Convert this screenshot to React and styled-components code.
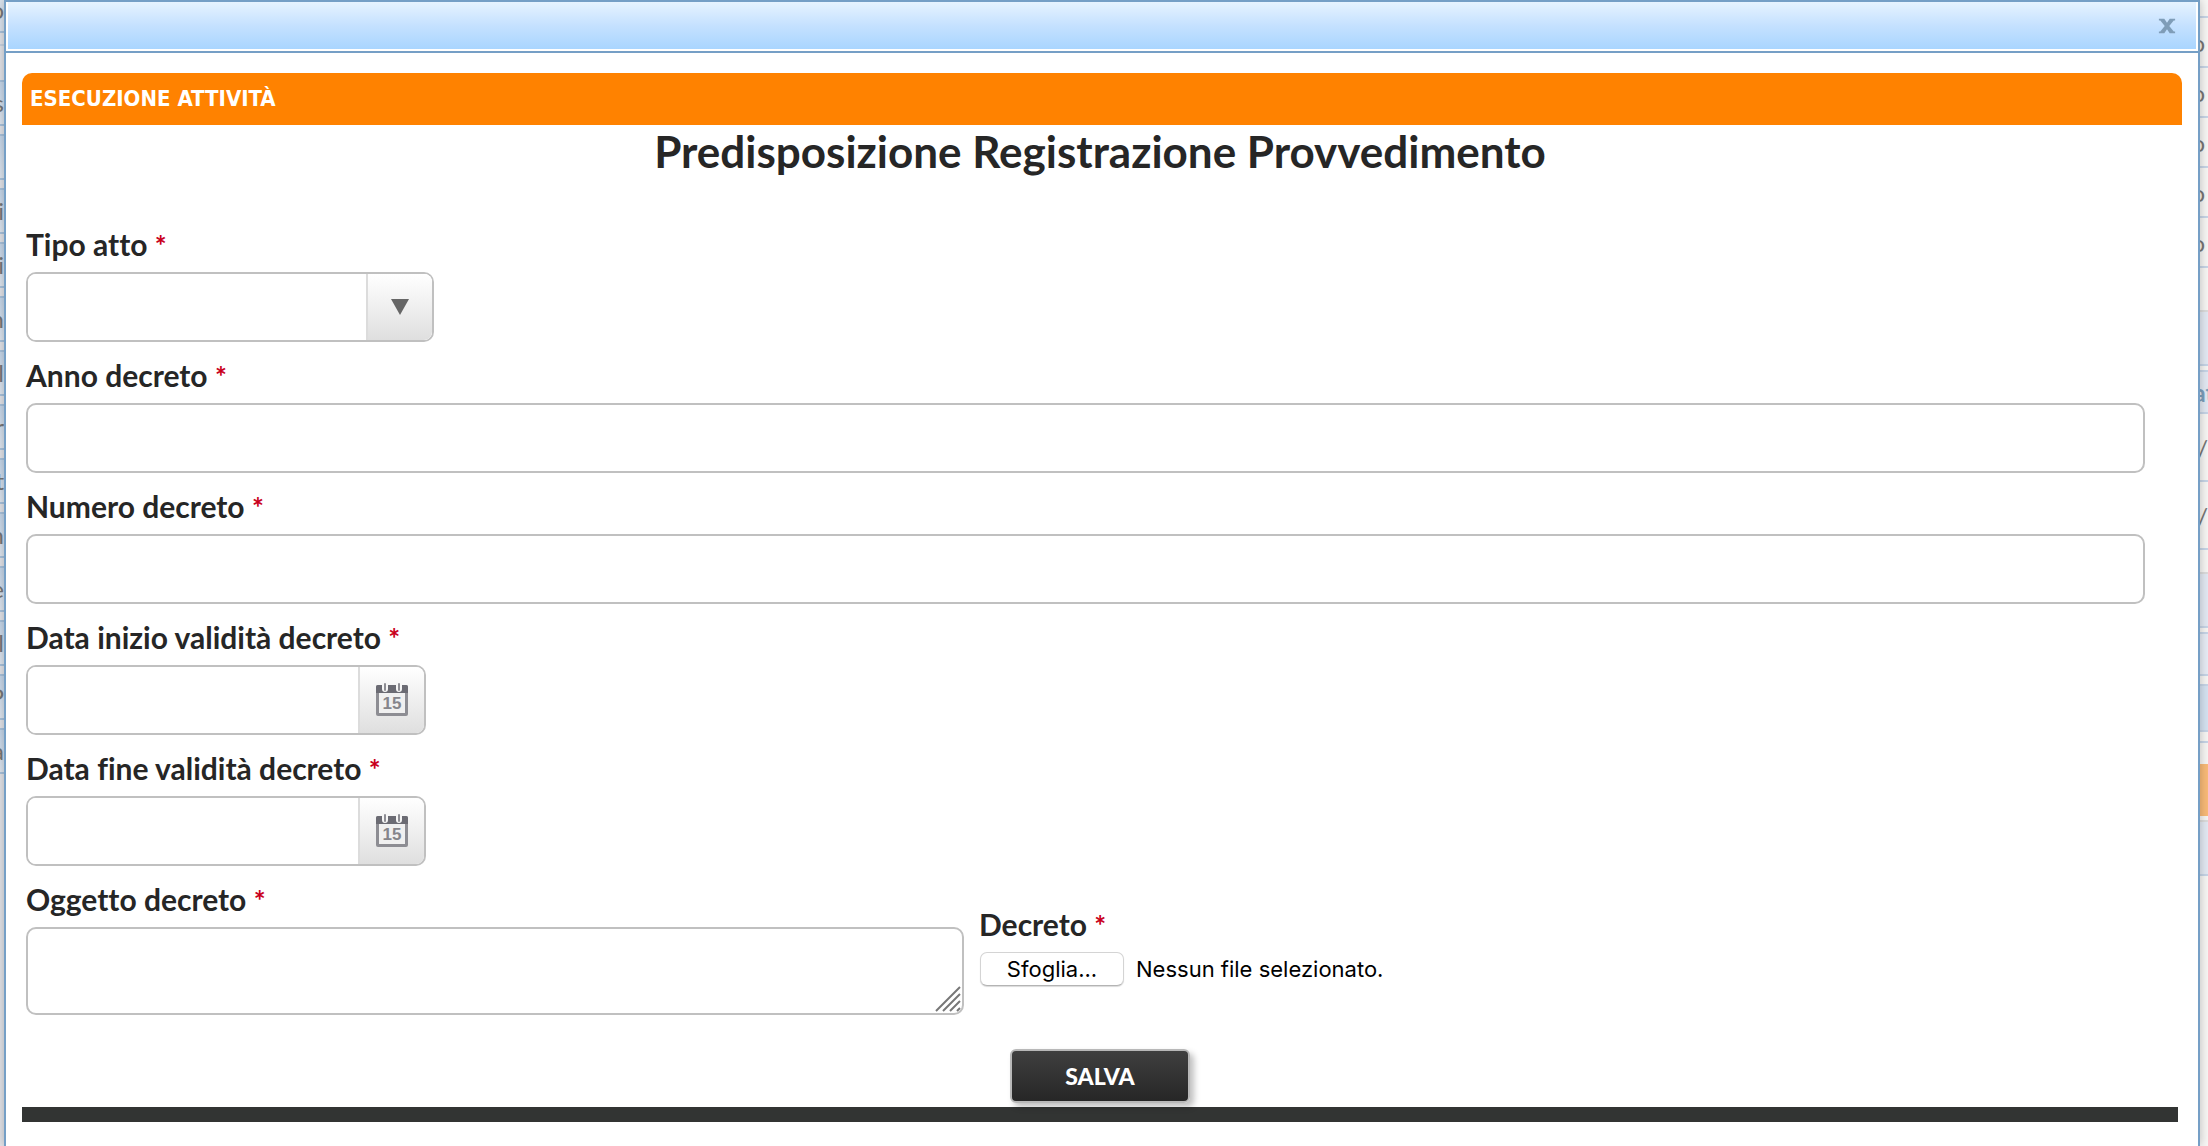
import { useState } from "react";
import styled, { createGlobalStyle } from "styled-components";

const leftRows = ["s", "", "i", "i", "n", "l", "r", "t", "n", "e", "l", "P", "a"];

const rightCells = [
  { height: 18 },
  { height: 50, text: "o" },
  { height: 50, text: "o" },
  { height: 50, text: "o" },
  { height: 50, text: "o" },
  { height: 50, text: "o" },
  { height: 44, line: "#dddddd" },
  { height: 54, tone: "#e4eaf4" },
  { height: 6 },
  { height: 42, text: "at", tone: "#e4eaf4", strong: true },
  { height: 68, text: "/" },
  { height: 68, text: "/" },
  { height: 24, line: "#dddddd" },
  { height: 54, tone: "#e4eaf4" },
  { height: 6 },
  { height: 42, tone: "#e8edf6" },
  { height: 10 },
  { height: 46, tone: "#d6e3f2" },
  { height: 11 },
  { height: 21, line: "#f8f7f5" },
  { height: 52, tone: "#fabb78", line: "#fabb78" },
  { height: 6, line: "#dddddd" },
  { height: 54, tone: "#e4eaf4" },
];

function CalendarIcon() {
  return (
    <svg width="34" height="34" viewBox="0 0 34 34" aria-hidden="true">
      <rect x="1" y="2" width="32" height="31" rx="2" fill="#8d8d93" />
      <path d="M1 4a2 2 0 0 1 2-2h28a2 2 0 0 1 2 2v6H1z" fill="#6b6b73" />
      <rect x="4" y="10" width="26" height="20" fill="#f0f0f0" />
      <path d="M10 1v5M24 1v5" stroke="#f6f6f6" strokeWidth="6" strokeLinecap="round" />
      <path d="M10 1v6M24 1v6" stroke="#8d8d93" strokeWidth="2" strokeLinecap="round" />
      <text x="17" y="26" textAnchor="middle">
        15
      </text>
    </svg>
  );
}

function DateField({ id, label }) {
  return (
    <Field>
      <FieldLabel htmlFor={id}>
        {label} <Required>*</Required>
      </FieldLabel>
      <DateBox>
        <input id={id} type="text" />
        <button type="button" aria-label={`Calendario ${label}`}>
          <CalendarIcon />
        </button>
      </DateBox>
    </Field>
  );
}

function App() {
  const [fileName, setFileName] = useState("");

  const handleFile = (e) => {
    const file = e.target.files[0];
    setFileName(file ? file.name : "");
  };

  return (
    <Page>
      <GlobalStyle />
      <LeftEdge aria-hidden="true">
        <LeftTop>o</LeftTop>
        <LeftHead />
        {leftRows.map((letter, i) => (
          <LeftRow key={i}>{letter}</LeftRow>
        ))}
      </LeftEdge>

      <Dialog role="dialog" aria-label="Esecuzione attività">
        <TitleBar>
          <CloseButton type="button" aria-label="Chiudi">
            <svg width="18" height="16" viewBox="0 0 20 16">
              <path
                d="M1 0h6l3 4.500 3-4.500h6v2h-1.500L12.500 8l5 6H19v2h-6l-3-4.500L7 16H1v-2h1.500l5-6-5-6H1z"
                fill="#7f9db8"
              />
            </svg>
          </CloseButton>
        </TitleBar>

        <Body>
          <Banner>ESECUZIONE ATTIVITÀ</Banner>
          <Form onSubmit={(e) => e.preventDefault()}>
            <Title>Predisposizione Registrazione Provvedimento</Title>
            <Fields>
              <Field>
                <FieldLabel htmlFor="tipo">
                  Tipo atto <Required>*</Required>
                </FieldLabel>
                <SelectBox>
                  <select id="tipo" defaultValue="">
                    <option value=""></option>
                  </select>
                  <SelectArrow>
                    <svg width="18" height="16" viewBox="0 0 18 16">
                      <path d="M0 0h18L9 16z" fill="#666666" />
                    </svg>
                  </SelectArrow>
                </SelectBox>
              </Field>
              <Field>
                <FieldLabel htmlFor="anno">
                  Anno decreto <Required>*</Required>
                </FieldLabel>
                <TextInput id="anno" type="text" />
              </Field>
              <Field>
                <FieldLabel htmlFor="numero">
                  Numero decreto <Required>*</Required>
                </FieldLabel>
                <TextInput id="numero" type="text" />
              </Field>
              <DateField id="inizio" label="Data inizio validità decreto" />
              <DateField id="fine" label="Data fine validità decreto" />
              <LastRow>
                <ObjectField>
                  <FieldLabel htmlFor="oggetto">
                    Oggetto decreto <Required>*</Required>
                  </FieldLabel>
                  <AreaBox>
                    <textarea id="oggetto" />
                    <svg width="26" height="26" viewBox="0 0 26 26">
                      <path
                        d="M1 25L25 1M8 25L25 8M15 25L25 15M22 25L25 22"
                        stroke="#777777"
                        strokeWidth="2"
                      />
                    </svg>
                  </AreaBox>
                </ObjectField>
                <FileField>
                  <FieldLabel htmlFor="file">
                    Decreto <Required>*</Required>
                  </FieldLabel>
                  <FileRow>
                    <HiddenFile id="file" type="file" onChange={handleFile} />
                    <FileButton htmlFor="file">Sfoglia...</FileButton>
                    <span>{fileName || "Nessun file selezionato."}</span>
                  </FileRow>
                </FileField>
              </LastRow>
            </Fields>
            <Actions>
              <SaveButton type="submit">SALVA</SaveButton>
            </Actions>
          </Form>
          <BottomBar />
        </Body>
      </Dialog>

      <RightEdge aria-hidden="true">
        {rightCells.map((cell, i) => (
          <RightCell
            key={i}
            $height={cell.height}
            $tone={cell.tone}
            $line={cell.line}
            $strong={cell.strong}
            $inset={cell.text === "o"}
          >
            {cell.text}
          </RightCell>
        ))}
      </RightEdge>
    </Page>
  );
}

export default App;

const GlobalStyle = createGlobalStyle`
  * {
    box-sizing: border-box;
  }

  body {
    margin: 0;
    background: #f8f7f5;
    font-family: Lato, "Open Sans", sans-serif;
    font-variant-ligatures: none;
    color: #262626;
  }
`;

const Page = styled.div`
  display: flex;
  height: 100vh;
  overflow: hidden;
`;

const LeftEdge = styled.div`
  flex: 0 0 4px;
  overflow: hidden;
  background: #e3e4e9;
  font-size: 24px;
  line-height: 42px;
  color: #777777;
`;

const LeftTop = styled.div`
  display: flex;
  justify-content: flex-end;
  height: 33px;
  line-height: 20px;
  background: #dbe4ef;
  border-bottom: 2px solid #aac3dc;
`;

const LeftHead = styled.div`
  height: 36px;
  margin-top: 11px;
  border-top: 2px solid #c9d3e0;
`;

const LeftRow = styled.div`
  display: flex;
  justify-content: flex-end;
  height: 46px;
  margin-bottom: 8px;
  background: linear-gradient(#c6d7ea, #dfe6ef);
  border: solid #aac3dc;
  border-width: 2px 0;
`;

const RightEdge = styled.div`
  flex: 0 0 8px;
  overflow: hidden;
  background: #f8f7f5;
`;

const RightCell = styled.div`
  display: flex;
  align-items: center;
  justify-content: ${({ $strong }) => ($strong ? "center" : "flex-end")};
  height: ${({ $height }) => $height}px;
  padding-right: ${({ $inset }) => ($inset ? 3 : 0)}px;
  background: ${({ $tone }) => $tone || "#f8f7f5"};
  border-bottom: 2px solid ${({ $line }) => $line || "#c8d6e8"};
  font-size: 24px;
  font-weight: ${({ $strong }) => ($strong ? 700 : 400)};
  color: ${({ $strong }) => ($strong ? "#7b9fbd" : "#777777")};
`;

const Dialog = styled.section`
  position: relative;
  flex: 1;
  min-width: 0;
  background: #ffffff;
  border: 2px solid #759fc6;
  border-bottom: 0;
  box-shadow: 0 0 10px rgba(0, 0, 0, 0.25);
`;

const TitleBar = styled.header`
  display: flex;
  align-items: center;
  justify-content: flex-end;
  height: 49px;
  margin-bottom: 2px;
  padding-right: 20px;
  background: linear-gradient(#e6f3ff, #c5e1ff 50%, #a9d5ff);
  border: solid #ffffff;
  border-width: 0 2px 2px;
  box-shadow: 0 2px 0 #759fc6;
`;

const CloseButton = styled.button`
  display: flex;
  padding: 0;
  border: 0;
  background: none;
  cursor: pointer;
`;

const Body = styled.div`
  padding: 20px 16px;
`;

const Banner = styled.div`
  height: 52px;
  padding-left: 8px;
  border-radius: 10px 10px 0 0;
  background: #ff8200;
  color: #ffffff;
  font-family: "DejaVu Sans Condensed", "DejaVu Sans", sans-serif;
  font-size: 22px;
  font-weight: 700;
  line-height: 52px;
`;

const Form = styled.form`
  padding: 0 8px 0 4px;
`;

const Title = styled.h1`
  height: 86px;
  margin: 0;
  font-size: 44px;
  font-weight: 700;
  line-height: 53px;
  text-align: center;
`;

const Fields = styled.div`
  padding-right: 29px;
`;

const Field = styled.div`
  display: flex;
  flex-direction: column;
  align-items: flex-start;
`;

const FieldLabel = styled.label`
  padding: 6px 0 1px;
  font-size: 30px;
  font-weight: 700;
  line-height: 54px;
`;

const Required = styled.span`
  color: #c9001c;
  font-size: 28px;
  line-height: 1;
`;

const TextInput = styled.input`
  width: 100%;
  height: 70px;
  padding: 0 16px;
  border: 2px solid #c0c0c0;
  border-radius: 10px;
  background: #ffffff;
  font: inherit;
  font-size: 28px;
`;

const SelectBox = styled.div`
  display: grid;
  width: 408px;
  height: 70px;
  border: 2px solid #c0c0c0;
  border-radius: 10px;
  overflow: hidden;

  select {
    grid-area: 1 / 1;
    padding: 0 76px 0 16px;
    border: 0;
    background: #ffffff;
    appearance: none;
    font: inherit;
    font-size: 28px;
  }
`;

const SelectArrow = styled.span`
  display: flex;
  grid-area: 1 / 1;
  align-items: center;
  justify-content: center;
  justify-self: end;
  width: 66px;
  border-left: 2px solid #dcdcdc;
  background: linear-gradient(#ffffff, #dfdfdf);
  pointer-events: none;
`;

const DateBox = styled.div`
  display: flex;
  width: 400px;
  height: 70px;
  border: 2px solid #c0c0c0;
  border-radius: 10px;
  overflow: hidden;

  input {
    flex: 1;
    min-width: 0;
    padding: 0 16px;
    border: 0;
    font: inherit;
    font-size: 28px;
  }

  button {
    display: flex;
    align-items: center;
    justify-content: center;
    width: 66px;
    padding: 0;
    border: 0;
    border-left: 2px solid #dcdcdc;
    background: linear-gradient(#ffffff, #dfdfdf);
    cursor: pointer;
  }

  text {
    fill: #85858b;
    font-family: "Liberation Sans", sans-serif;
    font-size: 17px;
    font-weight: 700;
  }
`;

const LastRow = styled.div`
  display: flex;
  gap: 15px;
`;

const ObjectField = styled(Field)`
  flex: 0 1 938px;
`;

const AreaBox = styled.div`
  position: relative;
  display: flex;
  width: 100%;

  textarea {
    width: 100%;
    height: 88px;
    padding: 8px 16px;
    border: 2px solid #c0c0c0;
    border-radius: 10px;
    resize: none;
    font: inherit;
    font-size: 28px;
  }

  svg {
    position: absolute;
    right: 3px;
    bottom: 3px;
    pointer-events: none;
  }
`;

const FileField = styled(Field)`
  padding-top: 25px;
`;

const FileRow = styled.div`
  display: flex;
  align-items: center;
  gap: 12px;
  color: #000000;
  font-family: Inter, Roboto, sans-serif;
  font-size: 22px;
  line-height: 34px;
`;

const HiddenFile = styled.input`
  position: absolute;
  width: 1px;
  height: 1px;
  opacity: 0;
`;

const FileButton = styled.label`
  width: 144px;
  margin-left: 1px;
  border: 1px solid #d4d4d4;
  border-bottom-color: #b4b4b4;
  border-radius: 7px;
  background: #ffffff;
  box-shadow: 0 1px 1px rgba(0, 0, 0, 0.15);
  line-height: 32px;
  text-align: center;
  cursor: pointer;
`;

const Actions = styled.div`
  display: flex;
  justify-content: center;
  padding: 34px 0 4px;
`;

const SaveButton = styled.button`
  width: 180px;
  height: 54px;
  border: 2px solid #b8b8b8;
  border-radius: 6px;
  background: linear-gradient(#3f3f3f, #262626);
  box-shadow: 4px 4px 6px rgba(0, 0, 0, 0.25);
  color: #ffffff;
  font-family: inherit;
  font-size: 23px;
  font-weight: 900;
  cursor: pointer;
`;

const BottomBar = styled.div`
  height: 15px;
  margin-right: 4px;
  background: #323433;
`;
